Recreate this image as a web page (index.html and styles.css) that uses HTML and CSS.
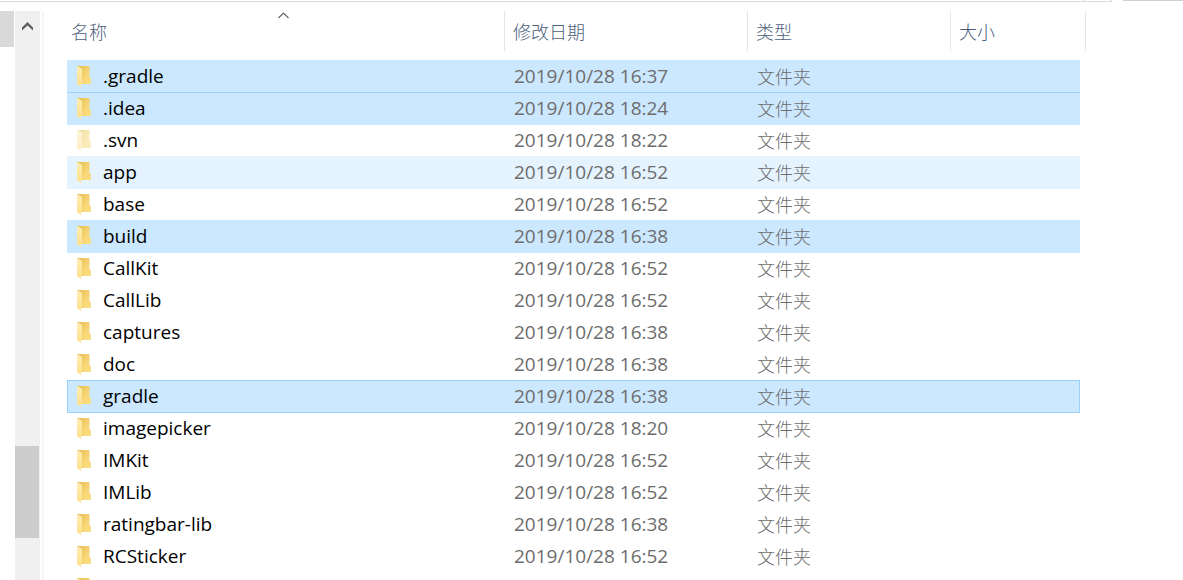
FILE: index.html
```html
<!DOCTYPE html>
<html lang="zh-CN">
<head>
<meta charset="utf-8">
<title>文件夹</title>
<link rel="stylesheet" href="styles.css">
</head>
<body>
<svg class="defs" width="0" height="0" aria-hidden="true">
  <defs>
    <linearGradient id="back" x1="0" y1="0" x2="1" y2="1">
      <stop offset="0" stop-color="#e6bd55"/>
      <stop offset="0.6" stop-color="#f6d674"/>
      <stop offset="1" stop-color="#fbdf85"/>
    </linearGradient>
    <linearGradient id="front" x1="0" y1="0" x2="0" y2="1">
      <stop offset="0" stop-color="#ffeeb4"/>
      <stop offset="1" stop-color="#ffdf8b"/>
    </linearGradient>
    <symbol id="folder" viewBox="0 0 14 21">
      <path d="M0 0H12.5V11.500L14 12.500V18H4L0 15Z" fill="url(#back)"/>
      <path d="M0 0L5 3V17H4V21L0 18Z" fill="url(#front)"/>
    </symbol>
  </defs>
</svg>
<div class="window">
  <header class="toolbar-edge">
    <div class="edge-left"></div>
    <div class="edge-right"></div>
  </header>
  <div class="panes">
    <aside class="nav"><div class="nav-item"></div></aside>
    <div class="scrollbar">
      <button class="scroll-up" aria-label="向上滚动">
        <svg width="11" height="10" viewBox="0 0 11 10"><path d="M0 6.500L5.500 1L11 6.500V9.500L5.500 4.500L0 9.500Z" fill="#606060"/></svg>
      </button>
      <div class="track"></div>
      <div class="thumb"></div>
    </div>
    <main class="list">
      <table class="files">
        <colgroup><col><col class="col-date"><col class="col-type"><col class="col-size"></colgroup>
        <thead>
          <tr>
            <th scope="col" aria-sort="ascending">名称<svg class="sort" width="11" height="7" viewBox="0 0 11 7"><path d="M0.500 6L5.500 1L10.500 6" fill="none" stroke="#666" stroke-width="1.200"/></svg></th>
            <th scope="col">修改日期</th>
            <th scope="col">类型</th>
            <th scope="col">大小</th>
          </tr>
        </thead>
        <tbody>
          <tr class="selected"><td class="name"><svg class="icon"><use href="#folder"/></svg>.gradle</td><td>2019/10/28 16:37</td><td class="type">文件夹</td><td></td></tr>
          <tr class="selected joined"><td class="name"><svg class="icon"><use href="#folder"/></svg>.idea</td><td>2019/10/28 18:24</td><td class="type">文件夹</td><td></td></tr>
          <tr class="hidden-item"><td class="name"><svg class="icon"><use href="#folder"/></svg>.svn</td><td>2019/10/28 18:22</td><td class="type">文件夹</td><td></td></tr>
          <tr class="hovered"><td class="name"><svg class="icon"><use href="#folder"/></svg>app</td><td>2019/10/28 16:52</td><td class="type">文件夹</td><td></td></tr>
          <tr><td class="name"><svg class="icon"><use href="#folder"/></svg>base</td><td>2019/10/28 16:52</td><td class="type">文件夹</td><td></td></tr>
          <tr class="selected"><td class="name"><svg class="icon"><use href="#folder"/></svg>build</td><td>2019/10/28 16:38</td><td class="type">文件夹</td><td></td></tr>
          <tr><td class="name"><svg class="icon"><use href="#folder"/></svg>CallKit</td><td>2019/10/28 16:52</td><td class="type">文件夹</td><td></td></tr>
          <tr><td class="name"><svg class="icon"><use href="#folder"/></svg>CallLib</td><td>2019/10/28 16:52</td><td class="type">文件夹</td><td></td></tr>
          <tr><td class="name"><svg class="icon"><use href="#folder"/></svg>captures</td><td>2019/10/28 16:38</td><td class="type">文件夹</td><td></td></tr>
          <tr><td class="name"><svg class="icon"><use href="#folder"/></svg>doc</td><td>2019/10/28 16:38</td><td class="type">文件夹</td><td></td></tr>
          <tr class="selected focused"><td class="name"><svg class="icon"><use href="#folder"/></svg>gradle</td><td>2019/10/28 16:38</td><td class="type">文件夹</td><td></td></tr>
          <tr><td class="name"><svg class="icon"><use href="#folder"/></svg>imagepicker</td><td>2019/10/28 18:20</td><td class="type">文件夹</td><td></td></tr>
          <tr><td class="name"><svg class="icon"><use href="#folder"/></svg>IMKit</td><td>2019/10/28 16:52</td><td class="type">文件夹</td><td></td></tr>
          <tr><td class="name"><svg class="icon"><use href="#folder"/></svg>IMLib</td><td>2019/10/28 16:52</td><td class="type">文件夹</td><td></td></tr>
          <tr><td class="name"><svg class="icon"><use href="#folder"/></svg>ratingbar-lib</td><td>2019/10/28 16:38</td><td class="type">文件夹</td><td></td></tr>
          <tr><td class="name"><svg class="icon"><use href="#folder"/></svg>RCSticker</td><td>2019/10/28 16:52</td><td class="type">文件夹</td><td></td></tr>
          <tr><td class="name"><svg class="icon"><use href="#folder"/></svg></td><td></td><td class="type">文件夹</td><td></td></tr>
        </tbody>
      </table>
    </main>
  </div>
</div>
</body>
</html>
```
FILE: styles.css
```css
* { box-sizing: border-box; }

body {
  margin: 0;
  background: #fff;
  color: #6d6d6d;
  font-family: "Open Sans", "Noto Sans CJK SC", sans-serif;
  font-size: 19px;
}

.defs { position: absolute; }

.window {
  display: flex;
  flex-direction: column;
  height: 100vh;
  overflow: hidden;
}

.toolbar-edge {
  display: flex;
  flex: none;
  gap: 11px;
  height: 11px;
}

.edge-left,
.edge-right { height: 2px; border-bottom: 1px solid #d9d9d9; }
.edge-left { flex: 1; border-right: 1px solid #d9d9d9; }
.edge-left::after {
  content: "";
  display: block;
  width: 1px;
  height: 1px;
  margin-left: auto;
  margin-right: 26px;
  background: #d9d9d9;
}
.edge-right { width: 60px; height: 1px; border-color: #d0d0d0; }

.panes { display: flex; flex: 1; min-height: 0; }

.nav { width: 15px; flex: none; }
.nav-item { width: 14px; height: 36px; background: #d9d9d9; }

.scrollbar {
  display: flex;
  flex: none;
  flex-direction: column;
  width: 25px;
  padding-bottom: 42px;
  background: #f0f0f0;
}
.scroll-up {
  display: flex;
  justify-content: center;
  align-items: center;
  height: 29px;
  padding: 0;
  border: 0;
  background: none;
}
.track { flex: 1; }
.thumb { width: 24px; height: 92px; background: #cdcdcd; }

.list {
  flex: 1;
  min-width: 0;
  margin-left: 2px;
  padding: 0 103px 0 23px;
  border-left: 2px solid #f5f5f5;
}

.files {
  width: 100%;
  border-collapse: separate;
  border-spacing: 0;
  table-layout: fixed;
}
.col-date { width: 243px; }
.col-type { width: 203px; }
.col-size { width: 130px; }

th {
  position: relative;
  height: 49px;
  padding: 0 0 10px 9px;
  color: #4c607a;
  font-family: "Noto Sans CJK SC", sans-serif;
  font-size: 18px;
  font-weight: 300;
  text-align: left;
}
th:first-child { padding-left: 4px; }
th::after {
  content: "";
  position: absolute;
  top: 0;
  right: -1px;
  width: 1px;
  height: 40px;
  background: #e5e5e5;
}
th:last-child::after { right: -6px; }

.sort { position: absolute; top: 1px; left: calc(50% - 8px); }

td {
  height: 32px;
  padding: 0 0 0 10px;
  line-height: 32px;
  white-space: nowrap;
}
.type {
  font-family: "Noto Sans CJK SC", sans-serif;
  font-size: 18px;
  font-weight: 300;
}
.name { color: #000; }
.icon {
  width: 14px;
  height: 21px;
  margin: 0 12px 2px 0;
  vertical-align: middle;
}

/* Highlights reach one pixel into the next row. */
.selected td { background: #cce8ff; box-shadow: 0 1px #cce8ff; }
.hovered td { background: #e5f3ff; box-shadow: 0 1px #e5f3ff; }
.joined td { box-shadow: 0 1px #cce8ff, inset 0 1px #99d1ff; }
.focused td { box-shadow: 0 1px #99d1ff, inset 0 1px #99d1ff; }
.focused td:first-child { box-shadow: 0 1px #99d1ff, inset 1px 1px #99d1ff; }
.focused td:last-child { box-shadow: 0 1px #99d1ff, inset -1px 1px #99d1ff; }
.hidden-item .icon { opacity: 0.5; }
```
